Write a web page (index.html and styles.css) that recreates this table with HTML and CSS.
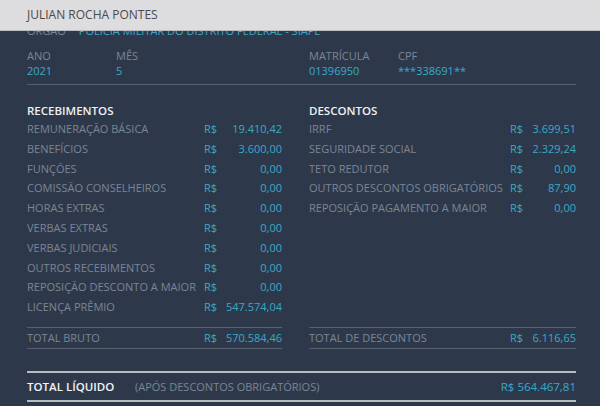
FILE: index.html
```html
<!DOCTYPE html>
<html lang="pt-BR">
<head>
    <meta charset="UTF-8">
    <meta name="viewport" content="width=device-width, initial-scale=1.0">
    <title>Remuneração</title>
    <link rel="stylesheet" href="styles.css">
</head>
<body>
    <div class="topbar">JULIAN ROCHA PONTES</div>
    <div class="sheet">
        <div class="orgao">
            <span class="label">ÓRGÃO</span>
            <span class="value">POLÍCIA MILITAR DO DISTRITO FEDERAL - SIAPE</span>
        </div>
        <div class="info">
            <div class="info-half info-left">
                <div class="field"><span class="label">ANO</span><span class="value">2021</span></div>
                <div class="field"><span class="label">MÊS</span><span class="value">5</span></div>
            </div>
            <div class="info-half">
                <div class="field"><span class="label">MATRÍCULA</span><span class="value">01396950</span></div>
                <div class="field"><span class="label">CPF</span><span class="value">***338691**</span></div>
            </div>
        </div>
        <div class="columns">
            <div class="col col-left">
                <h2>RECEBIMENTOS</h2>
                <div class="rows">
                    <div class="row"><span class="label">REMUNERAÇÃO BÁSICA</span><span class="cur">R$</span><span class="amt">19.410,42</span></div>
                    <div class="row"><span class="label">BENEFÍCIOS</span><span class="cur">R$</span><span class="amt">3.600,00</span></div>
                    <div class="row"><span class="label">FUNÇÕES</span><span class="cur">R$</span><span class="amt">0,00</span></div>
                    <div class="row"><span class="label">COMISSÃO CONSELHEIROS</span><span class="cur">R$</span><span class="amt">0,00</span></div>
                    <div class="row"><span class="label">HORAS EXTRAS</span><span class="cur">R$</span><span class="amt">0,00</span></div>
                    <div class="row"><span class="label">VERBAS EXTRAS</span><span class="cur">R$</span><span class="amt">0,00</span></div>
                    <div class="row"><span class="label">VERBAS JUDICIAIS</span><span class="cur">R$</span><span class="amt">0,00</span></div>
                    <div class="row"><span class="label">OUTROS RECEBIMENTOS</span><span class="cur">R$</span><span class="amt">0,00</span></div>
                    <div class="row"><span class="label">REPOSIÇÃO DESCONTO A MAIOR</span><span class="cur">R$</span><span class="amt">0,00</span></div>
                    <div class="row"><span class="label">LICENÇA PRÊMIO</span><span class="cur">R$</span><span class="amt">547.574,04</span></div>
                </div>
                <div class="row total"><span class="label">TOTAL BRUTO</span><span class="cur">R$</span><span class="amt">570.584,46</span></div>
            </div>
            <div class="col col-right">
                <h2>DESCONTOS</h2>
                <div class="rows">
                    <div class="row"><span class="label">IRRF</span><span class="cur">R$</span><span class="amt">3.699,51</span></div>
                    <div class="row"><span class="label">SEGURIDADE SOCIAL</span><span class="cur">R$</span><span class="amt">2.329,24</span></div>
                    <div class="row"><span class="label">TETO REDUTOR</span><span class="cur">R$</span><span class="amt">0,00</span></div>
                    <div class="row"><span class="label">OUTROS DESCONTOS OBRIGATÓRIOS</span><span class="cur">R$</span><span class="amt">87,90</span></div>
                    <div class="row"><span class="label">REPOSIÇÃO PAGAMENTO A MAIOR</span><span class="cur">R$</span><span class="amt">0,00</span></div>
                </div>
                <div class="row total"><span class="label">TOTAL DE DESCONTOS</span><span class="cur">R$</span><span class="amt">6.116,65</span></div>
            </div>
        </div>
        <div class="liquido">
            <span class="liq-title">TOTAL LÍQUIDO</span>
            <span class="liq-note">(APÓS DESCONTOS OBRIGATÓRIOS)</span>
            <span class="liq-value">R$ 564.467,81</span>
        </div>
    </div>
</body>
</html>
```

FILE: styles.css
```css
body {
    font-family: "Open Sans", Arial, sans-serif;
    font-size: 11px;
    margin: 0;
    background-color: #2d394b;
    color: #7c8595;
    overflow: hidden;
}
.topbar {
    position: fixed;
    top: 0;
    left: 0;
    right: 0;
    height: 30px;
    line-height: 30px;
    padding-left: 27px;
    background-color: #dddcde;
    border-bottom: 1px solid #b9bcc2;
    color: #4a4a4a;
    font-size: 12px;
}
.sheet {
    width: 549px;
    padding: 23px 0 0 27px;
}
.label {
    color: #7c8595;
}
.value, .cur, .amt {
    color: #39a9c7;
}
.orgao {
    display: flex;
    gap: 13px;
    line-height: 16px;
}
.info {
    display: flex;
    gap: 27px;
    margin-top: 9px;
    padding-bottom: 6px;
    border-bottom: 1px solid #56606e;
}
.info-half {
    display: flex;
    flex: 1;
}
.info-left {
    flex: 0 0 255px;
}
.field {
    display: flex;
    flex-direction: column;
    width: 89px;
    line-height: 15px;
}
.columns {
    display: flex;
    gap: 27px;
    margin-top: 18px;
}
.col-left {
    width: 255px;
}
.col-right {
    width: 267px;
}
h2 {
    margin: 0;
    font-size: 11.5px;
    font-weight: 600;
    color: #eef0f2;
    line-height: 16px;
}
.rows {
    height: 208px;
    border-bottom: 1px solid #56606e;
}
.row {
    display: grid;
    height: 19.8px;
    line-height: 19.8px;
    white-space: nowrap;
}
.col-left .row {
    grid-template-columns: 177px 20px 58px;
}
.col-right .row {
    grid-template-columns: 201px 20px 46px;
}
.amt {
    text-align: right;
}
.row.total {
    height: 20px;
    line-height: 20px;
    border-bottom: 1px solid #56606e;
}
.liquido {
    display: flex;
    align-items: center;
    height: 27px;
    margin-top: 22px;
    border-top: 2px solid #b8bcc1;
    border-bottom: 2px solid #b8bcc1;
}
.liq-title {
    color: #f2f3f5;
    font-weight: 600;
    font-size: 11.5px;
    width: 108px;
}
.liq-note {
    color: #7c8595;
    flex: 1;
}
.liq-value {
    color: #39a9c7;
    font-size: 11.5px;
}
```
